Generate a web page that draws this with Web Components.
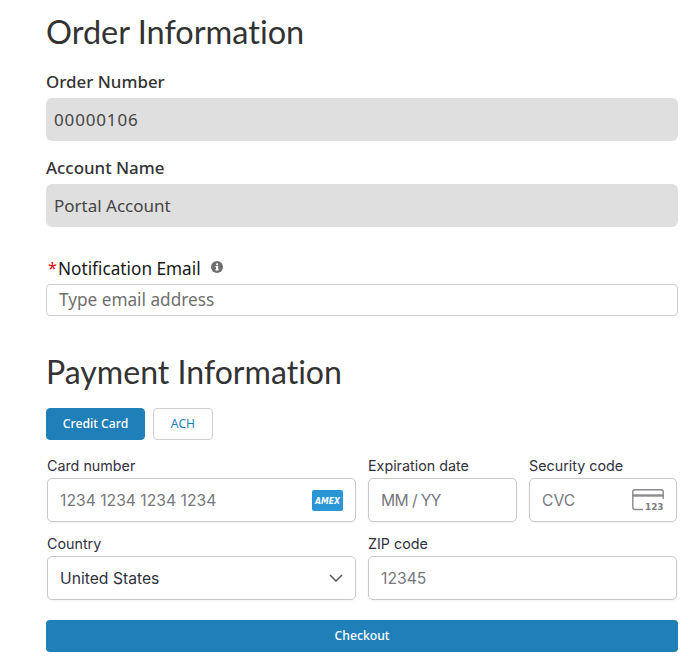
<!DOCTYPE html>
<html lang="en"><head><meta charset="utf-8"><title>Checkout</title>
<style>html,body{margin:0;background:#fff}</style></head><body>
<checkout-page>
  <section-title style="--title-size:32.5px">Order Information</section-title>
  <read-field style="margin-top:18px;--value-spacing:.85px" label="Order Number" value="00000106"></read-field>
  <read-field style="margin-top:15px" label="Account Name" value="Portal Account"></read-field>
  <email-field style="margin-top:29px"></email-field>
  <section-title style="margin-top:36px;--title-size:32.1px">Payment Information</section-title>
  <pay-tabs style="margin-top:16px"></pay-tabs>
  <card-form style="margin-top:17px"></card-form>
  <checkout-button style="margin-top:20px">Checkout</checkout-button>
</checkout-page>
<script>
const PLEX='"Noto Sans","Open Sans",sans-serif';
const INTER='Inter,"Liberation Sans",sans-serif';
function def(name,html){
  customElements.define(name,class extends HTMLElement{
    connectedCallback(){
      if(this.shadowRoot)return;
      const r=this.attachShadow({mode:'open'});
      r.innerHTML=typeof html==='function'?html(this):html;
    }
  });
}
def('checkout-page',`<style>:host{display:block;box-sizing:border-box;width:699px;height:662px;padding:12px 21px 0 46px;overflow:hidden;color:#333}</style><slot></slot>`);
def('section-title',`<style>:host{display:block;font:400 var(--title-size,32px)/40px Lato,sans-serif;color:#333;font-variant-ligatures:none}</style><slot></slot>`);
def('read-field',el=>`<style>
:host{display:block;font-family:${PLEX}}
.l{font-size:16.9px;line-height:24px;font-weight:500;color:#333;height:24px;margin-bottom:4px}
.v{box-sizing:border-box;height:43px;background:#dfdfdf;border-radius:6px;padding:0 8px;font-size:17px;line-height:43px;color:#444;letter-spacing:var(--value-spacing,0)}
</style><div class="l">${el.getAttribute('label')}</div><div class="v">${el.getAttribute('value')}</div>`);
def('email-field',`<style>
:host{display:block;font-family:${PLEX}}
.l{display:flex;align-items:center;height:24px;margin-bottom:4px;padding-left:2px;font-size:17.2px;color:#181818}
.s{color:#e3000f;font-size:16px;margin-right:2px;width:8px;line-height:24px}
svg{margin-left:10px;margin-top:-2px}
.i{box-sizing:border-box;height:32px;border:1px solid #cfcfcf;border-radius:4px;padding:0 12px;font-size:17.2px;line-height:30px;color:#6f6f6f;background:#fff}
</style><div class="l"><span class="s">*</span><span>Notification Email</span>
<svg width="12" height="12" viewBox="0 0 12 12"><circle cx="6" cy="6" r="6" fill="#6f6f6f"/><rect x="5" y="5" width="2.2" height="4.2" fill="#fff"/><rect x="4.3" y="8.4" width="3.6" height="1" fill="#fff"/><rect x="4.4" y="5" width="1.5" height="1" fill="#fff"/><circle cx="6.1" cy="3.3" r="1.1" fill="#fff"/></svg></div>
<div class="i">Type email address</div>`);
def('pay-tabs',`<style>
:host{display:flex;gap:8px;font:500 12.2px/30px ${PLEX}}
span{box-sizing:border-box;height:32px;border-radius:4px;text-align:center}
.a{width:99px;background:#1f7fb8;border:1px solid #1f7fb8;color:#fff}
.b{width:60px;background:#fff;border:1px solid #d0d0d0;color:#1f7fb8;font-weight:400}
</style><span class="a">Credit Card</span><span class="b">ACH</span>`);
def('stripe-field',el=>`<style>
:host{display:block;font-family:${INTER};min-width:0}
.l{font-size:14.3px;line-height:17px;color:#30313d;margin-bottom:4px;height:17px}
.b{box-sizing:border-box;display:flex;align-items:center;justify-content:space-between;height:44px;padding:0 12px;border:1px solid #c9c9c9;border-radius:5px;background:#fff;box-shadow:0 1px 3px rgba(0,0,0,.05);font-size:15.7px;letter-spacing:var(--text-spacing,0);color:${el.hasAttribute('filled')?'#30313d':'#77787f'}}
::slotted(svg){display:block;flex:none}
</style><div class="l">${el.getAttribute('label')}</div><div class="b"><span>${el.getAttribute('text')}</span><slot></slot></div>`);
def('card-form',`<style>
:host{display:grid;grid-template-columns:1fr 1fr;gap:13px 12px;margin-left:1px;margin-right:1px}
.n{display:grid;grid-template-columns:149px 148px;gap:12px}
svg{display:block}
</style>
<stripe-field label="Card number" text="1234 1234 1234 1234"><svg width="31" height="21" viewBox="0 0 31 21"><rect width="31" height="21" rx="2" fill="#2a96d6"/><text x="15.5" y="13.6" text-anchor="middle" textLength="25" lengthAdjust="spacingAndGlyphs" font-family="'DejaVu Sans',sans-serif" font-size="8.5" font-weight="700" font-style="italic" fill="#fff">AMEX</text></svg></stripe-field>
<div class="n">
<stripe-field style="--text-spacing:-.6px" label="Expiration date" text="MM / YY"></stripe-field>
<stripe-field label="Security code" text="CVC"><svg width="32" height="22" viewBox="0 0 32 22"><path d="M11 20.5H3a2.2 2.2 0 0 1-2.2-2.2V3A2.2 2.2 0 0 1 3 .8h26A2.2 2.2 0 0 1 31.2 3v7" fill="none" stroke="#8a8a8f" stroke-width="1.4"/><path d="M.8 6.5h30.4" fill="none" stroke="#8a8a8f" stroke-width="2.4"/><text x="13" y="20.5" textLength="18.5" lengthAdjust="spacingAndGlyphs" font-family="'DejaVu Sans',sans-serif" font-size="9.5" font-weight="700" fill="#7c7c82">123</text></svg></stripe-field>
</div>
<stripe-field label="Country" text="United States" filled><svg width="14" height="8" viewBox="0 0 14 8"><path d="M1 1l6 6 6-6" fill="none" stroke="#55565e" stroke-width="1.5"/></svg></stripe-field>
<stripe-field label="ZIP code" text="12345"></stripe-field>`);
def('checkout-button',`<style>:host{display:block;box-sizing:border-box;height:32px;background:#1f7fb8;border-radius:4px;color:#fff;text-align:center;font:500 12.2px/32px ${PLEX}}</style><slot></slot>`);
</script></body></html>
